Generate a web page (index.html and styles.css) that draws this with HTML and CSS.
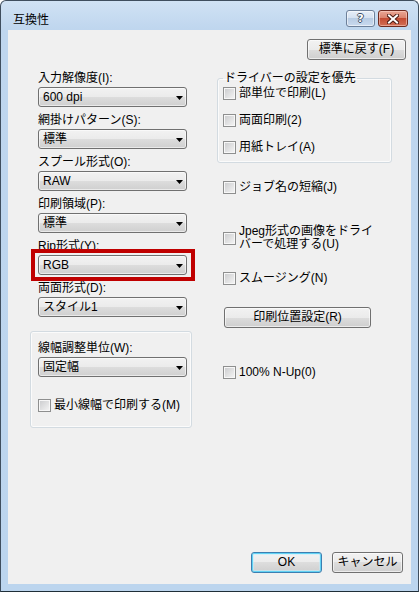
FILE: index.html
```html
<!DOCTYPE html>
<html lang="ja">
<head>
<meta charset="utf-8">
<title>互換性</title>
<link rel="stylesheet" href="styles.css">
</head>
<body>
<div class="window">
  <div class="titlebar">
    <span class="title">互換性</span>
    <div class="caption-buttons">
      <div class="cap help"><span class="qmark">?</span></div>
      <div class="cap close">
        <svg width="12" height="10" viewBox="0 0 12 10">
          <path d="M2 1.5 L10 8.5 M10 1.5 L2 8.5" stroke="#4a1a12" stroke-width="4" stroke-linecap="square"/>
          <path d="M2 1.5 L10 8.5 M10 1.5 L2 8.5" stroke="#ffffff" stroke-width="2" stroke-linecap="square"/>
        </svg>
      </div>
    </div>
  </div>
  <div class="client">
    <div class="toprow"><div class="btn btn-reset">標準に戻す(F)</div></div>
    <div class="main">
      <div class="col-left">
        <div class="field">
          <div class="lbl">入力解像度(I):</div>
          <div class="combo"><span>600 dpi</span><svg class="arrow" width="7" height="4" viewBox="0 0 7 4"><polygon points="0,0 7,0 3.5,4" fill="#000"/></svg></div>
        </div>
        <div class="field">
          <div class="lbl">網掛けパターン(S):</div>
          <div class="combo"><span>標準</span><svg class="arrow" width="7" height="4" viewBox="0 0 7 4"><polygon points="0,0 7,0 3.5,4" fill="#000"/></svg></div>
        </div>
        <div class="field">
          <div class="lbl">スプール形式(O):</div>
          <div class="combo"><span>RAW</span><svg class="arrow" width="7" height="4" viewBox="0 0 7 4"><polygon points="0,0 7,0 3.5,4" fill="#000"/></svg></div>
        </div>
        <div class="field">
          <div class="lbl">印刷領域(P):</div>
          <div class="combo"><span>標準</span><svg class="arrow" width="7" height="4" viewBox="0 0 7 4"><polygon points="0,0 7,0 3.5,4" fill="#000"/></svg></div>
        </div>
        <div class="field">
          <div class="lbl">Rip形式(Y):</div>
          <div class="combo"><span>RGB</span><svg class="arrow" width="7" height="4" viewBox="0 0 7 4"><polygon points="0,0 7,0 3.5,4" fill="#000"/></svg><div class="highlight"></div></div>
        </div>
        <div class="field">
          <div class="lbl">両面形式(D):</div>
          <div class="combo"><span>スタイル1</span><svg class="arrow" width="7" height="4" viewBox="0 0 7 4"><polygon points="0,0 7,0 3.5,4" fill="#000"/></svg></div>
        </div>
        <div class="group">
          <div class="lbl">線幅調整単位(W):</div>
          <div class="combo"><span>固定幅</span><svg class="arrow" width="7" height="4" viewBox="0 0 7 4"><polygon points="0,0 7,0 3.5,4" fill="#000"/></svg></div>
          <div class="cb-row cb-min"><span class="cb"></span><span class="cb-text">最小線幅で印刷する(M)</span></div>
        </div>
      </div>
      <div class="col-right">
        <fieldset class="fgroup">
          <legend>ドライバーの設定を優先</legend>
          <div class="cb-row first"><span class="cb"></span><span class="cb-text">部単位で印刷(L)</span></div>
          <div class="cb-row in"><span class="cb"></span><span class="cb-text">両面印刷(2)</span></div>
          <div class="cb-row in"><span class="cb"></span><span class="cb-text">用紙トレイ(A)</span></div>
        </fieldset>
        <div class="cb-row out r-job"><span class="cb"></span><span class="cb-text">ジョブ名の短縮(J)</span></div>
        <div class="cb-row out r-jpeg"><span class="cb"></span><span class="cb-text">Jpeg形式の画像をドライ<br>バーで処理する(U)</span></div>
        <div class="cb-row out r-smooth"><span class="cb"></span><span class="cb-text">スムージング(N)</span></div>
        <div class="btn btn-pos">印刷位置設定(R)</div>
        <div class="cb-row out r-nup"><span class="cb"></span><span class="cb-text">100% N-Up(0)</span></div>
      </div>
    </div>
    <div class="footer">
      <div class="btn btn-ok">OK</div>
      <div class="btn btn-cancel">キャンセル</div>
    </div>
  </div>
</div>
</body>
</html>
```

FILE: styles.css
```css
* { box-sizing: border-box; }
html, body { margin: 0; padding: 0; }
body {
  width: 419px;
  height: 592px;
  overflow: hidden;
  background: #ffffff;
  font-family: "Liberation Sans", "Noto Sans CJK JP", sans-serif;
  font-size: 12px;
  color: #000;
}
.window {
  width: 419px;
  height: 592px;
  display: flex;
  flex-direction: column;
  border: 1px solid #3f4e5e;
  border-bottom-color: #1f2e38;
  border-radius: 6px 6px 0 0;
  padding: 0 7px 7px;
  background: linear-gradient(#d0e2f4, #bfd6ee 28px, #bcd5ee);
}
.titlebar {
  height: 29px;
  display: flex;
  justify-content: space-between;
  align-items: flex-start;
}
.title {
  margin: 11px 0 0 5px;
  line-height: 14px;
  font-family: "Noto Sans CJK JP", sans-serif;
  font-size: 12px;
  color: #000;
}
.caption-buttons {
  display: flex;
  gap: 3px;
  margin: 9px 3px 0 0;
}
.cap {
  height: 17px;
  border-radius: 3px;
  display: flex;
  align-items: center;
  justify-content: center;
}
.help {
  width: 29px;
  border: 1px solid #6d809a;
  background: linear-gradient(#e6eef8, #d3e0f0 50%, #b8cce4 50%, #c9d9ee);
  box-shadow: inset 0 0 0 1px rgba(255,255,255,0.55);
}
.qmark {
  font-family: "DejaVu Sans", sans-serif;
  font-weight: bold;
  font-size: 11px;
  line-height: 13px;
  color: #fff;
  text-shadow: 1px 0 0 #3d4f66, -1px 0 0 #3d4f66, 0 1px 0 #3d4f66, 0 -1px 0 #3d4f66;
}
.close {
  width: 30px;
  border: 1px solid #6e2a1f;
  background: linear-gradient(#eaa795, #d9806a 50%, #c44c33 50%, #d26e55);
  box-shadow: inset 0 0 0 1px rgba(255,220,210,0.5);
}
.client {
  flex: 1;
  background: #f0f0f0;
  display: flex;
  flex-direction: column;
  padding: 9px 5px 11px 22px;
}
.toprow {
  display: flex;
  justify-content: flex-end;
}
.btn {
  height: 21px;
  border: 1px solid #707070;
  border-radius: 3px;
  background: linear-gradient(#f2f2f2, #ebebeb 50%, #dddddd 50%, #cfcfcf);
  box-shadow: inset 0 0 0 1px rgba(255,255,255,0.6);
  line-height: 19px;
  text-align: center;
  white-space: nowrap;
}
.btn-reset { width: 99px; }
.main {
  display: flex;
  margin-top: 11px;
}
.col-left {
  width: 162px;
  display: flex;
  flex-direction: column;
}
.col-right {
  width: 175px;
  margin-left: 25px;
  display: flex;
  flex-direction: column;
  align-items: flex-start;
}
.field {
  padding-left: 8px;
  margin-bottom: 6px;
}
.lbl {
  line-height: 14px;
  height: 14px;
  margin-bottom: 2px;
  white-space: nowrap;
}
.combo {
  position: relative;
  width: 149px;
  height: 20px;
  border: 1px solid #707070;
  border-radius: 3px;
  background: linear-gradient(#f2f2f2, #ebebeb 50%, #dddddd 50%, #cfcfcf);
  box-shadow: inset 0 0 0 1px rgba(255,255,255,0.55);
  display: flex;
  align-items: center;
  justify-content: space-between;
  padding: 0 3px 0 4px;
  line-height: 18px;
}
.arrow { display: block; margin-top: 1px; }
.highlight {
  position: absolute;
  left: -8px;
  right: -9px;
  top: -7px;
  bottom: -7px;
  border: 4px solid #c00000;
}
.group {
  margin-top: 8px;
  border: 1px solid #d3dbe1;
  border-radius: 3px;
  box-shadow: inset 0 0 0 1px #fbfbfb;
  padding: 9px 4px 15px 7px;
}
.cb-row {
  display: flex;
  align-items: center;
  gap: 3px;
  line-height: 13px;
  white-space: nowrap;
}
.cb {
  flex: none;
  width: 13px;
  height: 13px;
  border: 1px solid #8e8f8f;
  background: linear-gradient(135deg, #c9cacc, #f6f6f6);
  box-shadow: inset 0 0 0 1px #f7f7f7;
}
.cb-text { display: block; }
.cb-min { margin-top: 22px; }
.fgroup {
  width: 175px;
  min-width: 0;
  margin: 0;
  padding: 0 5px 8px 5px;
  border: 1px solid #d3dbe1;
  border-radius: 3px;
  box-shadow: inset 0 0 0 1px #fbfbfb;
}
.fgroup legend {
  padding: 0 1px;
  margin: 0;
  line-height: 14px;
  white-space: nowrap;
}
.cb-row.first { margin-top: 2px; }
.cb-row.in { margin-top: 14px; }
.cb-row.out { padding-left: 6px; }
.r-job { margin-top: 18px; }
.r-jpeg { margin-top: 31px; }
.r-smooth { margin-top: 21px; }
.btn-pos {
  width: 147px;
  margin: 22px 0 0 7px;
}
.r-nup { margin-top: 38px; }
.footer {
  margin-top: auto;
  margin-right: 3px;
  display: flex;
  justify-content: flex-end;
  gap: 10px;
}
.btn-ok, .btn-cancel { width: 71px; }
.btn-ok {
  border-color: #3c7fb1;
  box-shadow: inset 0 0 0 1px #61d2f4, inset 0 0 0 2px rgba(190,240,255,0.5);
}
```
